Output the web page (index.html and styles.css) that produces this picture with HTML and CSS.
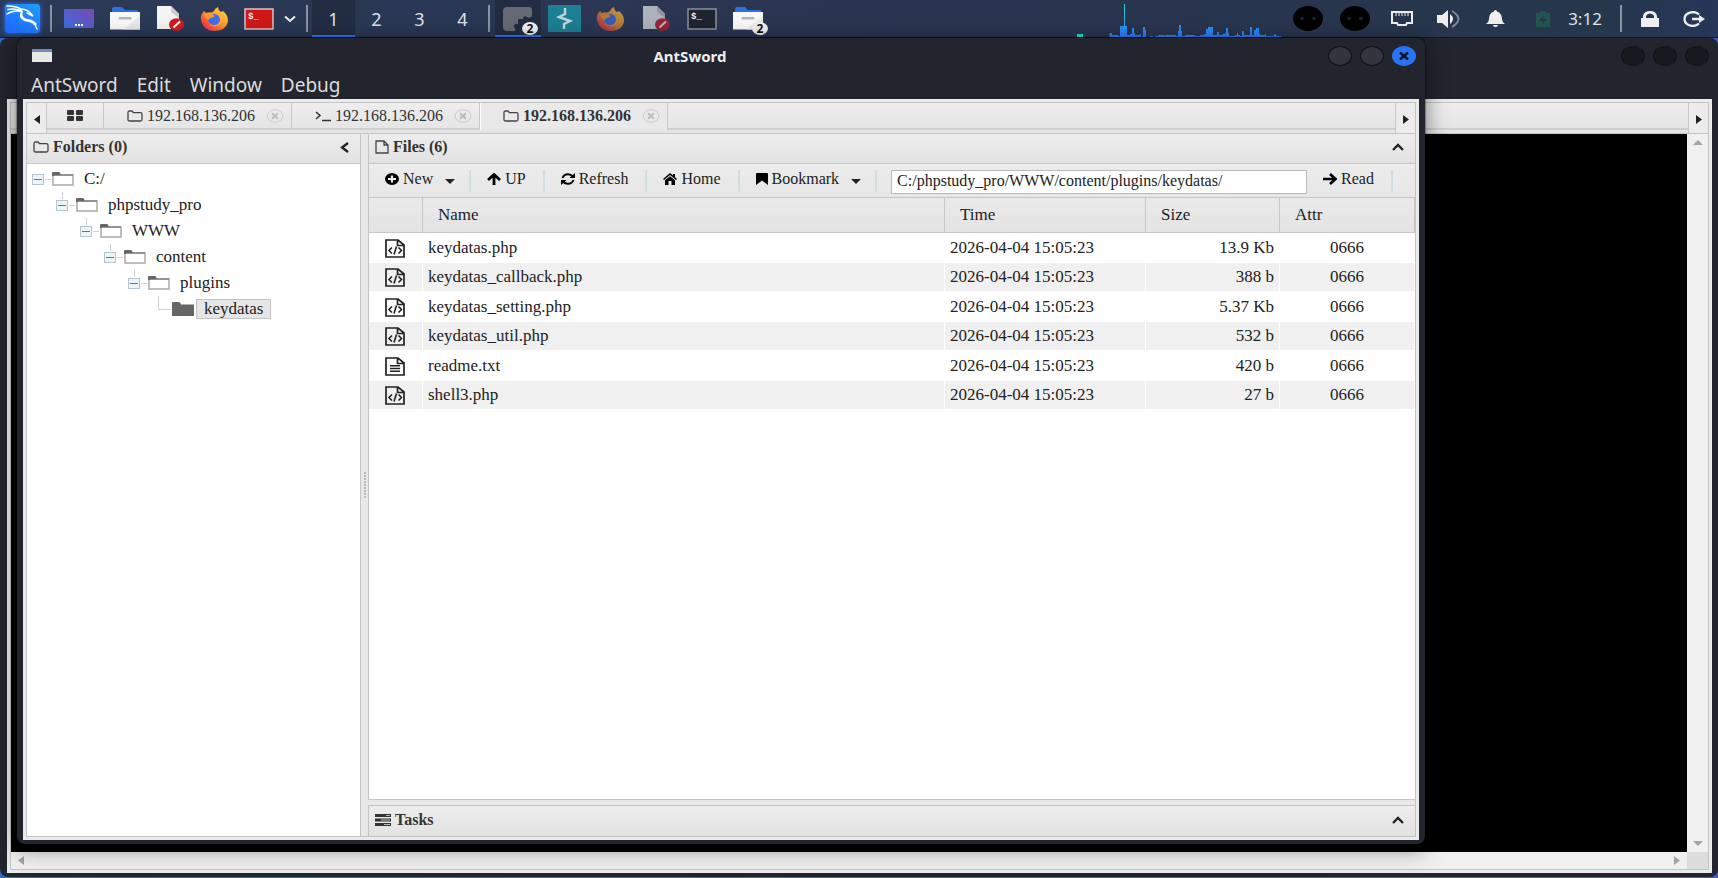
FILE: index.html
```html
<!DOCTYPE html>
<html lang="en">
  <head>
    <meta charset="UTF-8" />
    <meta name="viewport" content="width=device-width, initial-scale=1.0" />
    <title>AntSword</title>
    <link rel="stylesheet" href="styles.css">
  </head>
  <body>
    <!-- shared icons -->
    <svg class="sprite" width="0" height="0" aria-hidden="true">
      <defs>
        <linearGradient id="kaliBg" x1="0" y1="1" x2="1" y2="0">
          <stop offset="0" stop-color="#1f66ff" />
          <stop offset="1" stop-color="#1f9cff" />
        </linearGradient>
        <linearGradient id="deskBg" x1="0" y1="1" x2="1" y2="0">
          <stop offset="0" stop-color="#3b6fe0" />
          <stop offset="1" stop-color="#7a48b0" />
        </linearGradient>
        <linearGradient id="foxBg" x1="1" y1="0" x2="0" y2="1">
          <stop offset="0" stop-color="#ffe14d" />
          <stop offset="0.45" stop-color="#ff9a2b" />
          <stop offset="0.8" stop-color="#f7413f" />
          <stop offset="1" stop-color="#e5206e" />
        </linearGradient>
        <linearGradient id="cpuBg" x1="0" y1="0" x2="0" y2="1">
          <stop offset="0" stop-color="#27e0c8" />
          <stop offset="0.65" stop-color="#2496f5" />
          <stop offset="1" stop-color="#2a7cff" />
        </linearGradient>
      </defs>
      <symbol id="i-folder" viewBox="0 0 16 12" preserveAspectRatio="none">
        <path d="M1 9.500V2.500Q1 1 2.500 1H4.500Q6 1 6.200 2.600H13.500Q15 2.600 15 4V9.500Q15 11 13.500 11H2.500Q1 11 1 9.500Z" fill="none" stroke="#444" stroke-width="1.300" />
      </symbol>
      <symbol id="i-file" viewBox="0 0 14 14" preserveAspectRatio="none">
        <path d="M1 1H9L13 5V13H1ZM9 1V5H13" fill="none" stroke="#444" stroke-width="1.300" />
      </symbol>
      <symbol id="i-close" viewBox="0 0 18 14" preserveAspectRatio="none">
        <ellipse cx="9" cy="7" rx="8" ry="6.300" fill="none" stroke="#ccc" />
        <path d="M6 4.300L12 9.700M12 4.300L6 9.700" stroke="#bdbdbd" stroke-width="2.200" />
      </symbol>
      <symbol id="i-tree" viewBox="0 0 22 14" preserveAspectRatio="none">
        <path d="M1 3V13H21V3Z" fill="#fff" stroke="#aaa" stroke-width="1.500" />
        <path d="M0 4V1Q0 0 1 0H7Q8.500 0 8.500 2.500H21V3.500H2V4Z" fill="#666" />
      </symbol>
      <symbol id="i-tree-full" viewBox="0 0 22 14" preserveAspectRatio="none">
        <path d="M0 14V1Q0 0 1 0H7Q8.500 0 9 2.500H22V14Z" fill="#666" />
      </symbol>
      <symbol id="i-code" viewBox="0 0 20 19" preserveAspectRatio="none">
        <path d="M1 1H13L19 6V18H1ZM12.500 1V6.500H19" fill="none" stroke="#222" stroke-width="1.700" />
        <path d="M7 8.500L4 11.500L7 14.500M13.500 8.500L16.500 11.500L13.500 14.500M11.500 7.500L9 15.500" fill="none" stroke="#222" stroke-width="1.600" />
      </symbol>
      <symbol id="i-text" viewBox="0 0 20 19" preserveAspectRatio="none">
        <path d="M1 1H13L19 6V18H1ZM12.500 1V6.500H19" fill="none" stroke="#222" stroke-width="1.700" />
        <path d="M5 8.700H15M5 11.500H15M5 14.300H15" stroke="#222" stroke-width="1.600" />
      </symbol>
      <symbol id="i-fox" viewBox="0 0 28 24" preserveAspectRatio="none">
        <path d="M1 13C0 8 3 5 4 4L6 6Q9 5 11 5.500Q13 5 14 4Q15 1 18 0Q18 3 21 5L23 4Q28 8 28 14C27 21 21 24 14 24C7 24 2 19 1 13Z" fill="url(#foxBg)" />
        <ellipse cx="14" cy="12.500" rx="6" ry="5.500" fill="#3f6fe8" />
        <path d="M4 7Q9 5 12 7L15 9Q13 11 10 11L9 13Q5 12 4 7Z" fill="#ff9a2b" />
        <path d="M8 14Q10 18 14 18Q19 18 20 13Q20 10 18 7Q25 10 22 16Q18 21 12 19Q9 18 8 14Z" fill="#ffb03a" opacity="0.6" />
      </symbol>
      <symbol id="i-nodoc" viewBox="0 0 28 25" preserveAspectRatio="none">
        <path d="M1 0H15L23 8V23H1Z" fill="#f4f4f4" />
        <path d="M15 0L23 8V12L15 6Z" fill="#ccc" />
        <ellipse cx="20.500" cy="18.500" rx="7.500" ry="6.300" fill="#d11c22" />
        <path d="M17.500 21.500L24 15.500" stroke="#fff" stroke-width="2" />
      </symbol>
      <symbol id="i-files" viewBox="0 0 30 23" preserveAspectRatio="none">
        <path d="M2 7V2Q2 0 4 0H12L15 3H28V7Z" fill="#2f6fe6" />
        <path d="M0 5H30V22.500H0Z" fill="#f8f8f8" />
        <path d="M30 9V22.500H13Z" fill="#e9e9e9" />
        <rect x="8.500" y="10" width="13" height="2.500" rx="1.200" fill="#b5b5b5" />
      </symbol>
      <symbol id="i-eyes" viewBox="0 0 30 25" preserveAspectRatio="none">
        <ellipse cx="15" cy="12.500" rx="15" ry="12.500" fill="#000" />
        <circle cx="9" cy="12.500" r="1.800" fill="#1c2638" />
        <circle cx="21" cy="12.500" r="1.800" fill="#1c2638" />
      </symbol>
    </svg>

    <header class="panel">
      <button class="kali" aria-label="Applications">
        <svg width="35" height="29" viewBox="0 0 35 29">
          <rect width="35" height="29" rx="3" fill="url(#kaliBg)" />
          <path d="M2 2Q11 2 16 5Q23 5 28 12L22 9M3 5.500Q9 4 16 6.500M2 10Q8 6 17 7.500M17 7Q13 14 20 16.500Q30 17 32 25M17 8Q15 13 21 15.500Q28 16 31 20" fill="none" stroke="#fff" stroke-width="1.500" stroke-linecap="round" />
        </svg>
      </button>
      <span class="divider"></span>
      <nav class="launchers">
        <button aria-label="Show desktop">
          <svg width="30" height="19"><rect width="30" height="19" rx="1" fill="url(#deskBg)" /><path d="M11 16H19" stroke="#fff" stroke-width="2" stroke-dasharray="2 1" /></svg>
        </button>
        <button aria-label="Files"><svg width="30" height="23"><use href="#i-files" /></svg></button>
        <button aria-label="Text editor"><svg width="28" height="25"><use href="#i-nodoc" /></svg></button>
        <button aria-label="Firefox"><svg width="28" height="24"><use href="#i-fox" /></svg></button>
        <div class="split">
          <button aria-label="Root terminal">
            <svg width="30" height="22"><rect x="1" y="1" width="28" height="20" fill="#d01818" stroke="#d8c4c4" stroke-width="1.500" /><text class="prompt" x="4" y="11">$_</text></svg>
          </button>
          <button aria-label="More terminals">
            <svg width="12" height="8"><path d="M1 1.500L6 6L11 1.500" fill="none" stroke="#eee" stroke-width="2" /></svg>
          </button>
        </div>
      </nav>
      <span class="divider"></span>
      <nav class="workspaces">
        <button class="active">1</button>
        <button>2</button>
        <button>3</button>
        <button>4</button>
      </nav>
      <span class="divider"></span>
      <nav class="tasks">
        <button class="active" aria-label="AntSword">
          <svg width="30" height="24"><path d="M4 0H26Q29 0 29 3V9Q27 12 24 10Q20 8 20 12H15V17Q11 16 11 20Q14 23 11 24H4Q0 24 0 20V4Q0 0 4 0Z" fill="#666a74" /></svg>
          <span class="badge">2</span>
        </button>
        <button aria-label="Burp Suite">
          <svg width="33" height="27"><rect width="33" height="27" fill="#1d7f94" /><path d="M17 3V9L11 12L22 16L16 19V24" fill="none" stroke="#bcd5dc" stroke-width="2.500" /></svg>
        </button>
        <button class="dim" aria-label="Firefox"><svg width="28" height="24"><use href="#i-fox" /></svg></button>
        <button class="dim" aria-label="Text editor"><svg width="28" height="25"><use href="#i-nodoc" /></svg></button>
        <button aria-label="Terminal">
          <svg width="30" height="22"><rect x="1" y="1" width="28" height="20" fill="#1f2430" stroke="#8b919c" stroke-width="1.500" /><text class="prompt" x="4" y="11">$_</text></svg>
        </button>
        <button aria-label="Files"><svg width="30" height="23"><use href="#i-files" /></svg><span class="badge">2</span></button>
      </nav>

      <div class="tray">
        <svg class="cpu" width="207" height="37">
          <rect x="0" y="34" width="6" height="3" fill="#16e8c8" />
          <path d="M32.500 37V33H35V35H41V36H43V26H47V4H48V26H50V35H53V34H55V28H57V33H58V35H63V34H64V37ZM65 37V36H66V27H68V30H69V37ZM73 37V36H76V37ZM78 37V36H81V35H87V36H88V35H99V36H101V31H102V25H104V31H105V36H108V35H118V36H123V35H127V34H129V29H131V27H136V35H140V32H142V35H145V34H148V33H149V28H151V33H152V36H158V35H160V33H161V35H163V36H165V31H167V35H173V27H175V35H177V30H179V28H182V33H183V35H188V34H189V36H197V34H199V36H204V37Z" fill="url(#cpuBg)" />
        </svg>
        <button aria-label="Eyes"><svg width="30" height="25"><use href="#i-eyes" /></svg></button>
        <button aria-label="Eyes"><svg width="30" height="25"><use href="#i-eyes" /></svg></button>
        <button aria-label="Network">
          <svg width="22" height="15"><path d="M1 1H21V12H16L15 14H7L6 12H1Z" fill="none" stroke="#eee" stroke-width="2" /><path d="M5 2V5M8 2V5M11 2V5M14 2V5M17 2V5" stroke="#eee" /></svg>
        </button>
        <button aria-label="Volume">
          <svg width="24" height="18"><path d="M0 5H5L11 0V18L5 13H0Z" fill="#eee" /><path d="M13 4Q19 9 13 14Z" fill="#eee" /><path d="M15 1Q28 9 15 17" fill="none" stroke="#7f8899" stroke-width="2" /></svg>
        </button>
        <button aria-label="Notifications">
          <svg width="19" height="17"><path d="M9.500 0Q11 0 11 1.500Q16 3 16 9Q16 12 19 14H0Q3 12 3 9Q3 3 8 1.500Q8 0 9.500 0ZM7 15H12Q12 17 9.500 17Q7 17 7 15Z" fill="#eee" /></svg>
        </button>
        <button aria-label="Battery">
          <svg width="14" height="16"><path d="M0 2H4V0H10V2H14V16H0Z" fill="#24544e" /><path d="M8 4L3 10H7L6 14L11 8H7Z" fill="#21334b" /></svg>
        </button>
        <time class="clock">3:12</time>
        <span class="divider"></span>
        <button class="session" aria-label="Lock screen">
          <svg width="18" height="16"><path d="M0 7H2V5Q3 0 9 0Q15 0 16 5V7H18V16H0ZM5 7H13V5Q12 2.500 9 2.500Q6 2.500 5 5Z" fill="#eee" fill-rule="evenodd" /></svg>
        </button>
        <button class="session" aria-label="Log out">
          <svg width="23" height="16"><path d="M16 3.500Q13.500 1 9.500 1Q1.500 2 1.500 8Q1.500 14 9.500 15Q13.500 15 16 12.500" fill="none" stroke="#eee" stroke-width="2.300" /><path d="M9 8H18" stroke="#eee" stroke-width="2.500" /><path d="M16 4L22 8L16 12Z" fill="#eee" /></svg>
        </button>
      </div>
    </header>

    <main class="desktop">
      <!-- window behind -->
      <section class="window window-back">
        <div class="titlebar">
          <span class="title"></span>
          <button class="control" aria-label="Minimize"></button>
          <button class="control" aria-label="Maximize"></button>
          <button class="control" aria-label="Close"></button>
        </div>
        <div class="menubar"></div>
        <div class="client">
          <div class="frame">
            <div class="tabbar">
              <div class="tabs"></div>
              <button class="scroll-tab" aria-label="Next tabs"><svg width="6" height="9"><path d="M0 0L6 4.500L0 9Z" fill="#222" /></svg></button>
            </div>
            <div class="terminal">
              <div class="screen"></div>
              <div class="scrollbar-y">
                <svg width="10" height="5"><path d="M0 5L5 0L10 5Z" fill="#a3a3a3" /></svg>
                <svg width="10" height="5"><path d="M0 0L5 5L10 0Z" fill="#a3a3a3" /></svg>
              </div>
              <div class="scrollbar-x">
                <svg width="6" height="9"><path d="M6 0L0 4.500L6 9Z" fill="#a3a3a3" /></svg>
                <svg width="6" height="9"><path d="M0 0L6 4.500L0 9Z" fill="#a3a3a3" /></svg>
              </div>
              <div class="corner"></div>
            </div>
          </div>
        </div>
      </section>

      <!-- active window -->
      <section class="window window-front">
        <div class="titlebar">
          <svg width="20" height="13"><rect width="20" height="13" fill="#e8e8e4" /><rect width="20" height="3" fill="#6f8db8" /></svg>
          <span class="title">AntSword</span>
          <button class="control" aria-label="Minimize"></button>
          <button class="control" aria-label="Maximize"></button>
          <button class="control close" aria-label="Close">
            <svg width="10" height="8"><path d="M1 0.500L9 7.500M9 0.500L1 7.500" stroke="#0d1424" stroke-width="2.400" /></svg>
          </button>
        </div>
        <nav class="menubar">
          <button>AntSword</button>
          <button>Edit</button>
          <button>Window</button>
          <button>Debug</button>
        </nav>

        <div class="client">
          <div class="frame">
            <div class="tabbar">
              <button class="scroll-tab" aria-label="Previous tabs"><svg width="6" height="9"><path d="M6 0L0 4.500L6 9Z" fill="#222" /></svg></button>
              <div class="tabs">
                <button class="tab-home" aria-label="Home">
                  <svg width="16" height="11"><path d="M1 0H6Q7 0 7 1V4Q7 5 6 5H1Q0 5 0 4V1Q0 0 1 0ZM10 0H15Q16 0 16 1V4Q16 5 15 5H10Q9 5 9 4V1Q9 0 10 0ZM1 6H6Q7 6 7 7V10Q7 11 6 11H1Q0 11 0 10V7Q0 6 1 6ZM10 6H15Q16 6 16 7V10Q16 11 15 11H10Q9 11 9 10V7Q9 6 10 6Z" fill="#333" /></svg>
                </button>
                <div class="tab">
                  <button class="tab-label"><svg width="16" height="12"><use href="#i-folder" /></svg>192.168.136.206</button>
                  <button class="tab-close" aria-label="Close tab"><svg width="18" height="14"><use href="#i-close" /></svg></button>
                </div>
                <div class="tab">
                  <button class="tab-label"><svg width="16" height="12"><path d="M1 2L5 5.500L1 9M7 10.500H16" fill="none" stroke="#333" stroke-width="1.500" /></svg>192.168.136.206</button>
                  <button class="tab-close" aria-label="Close tab"><svg width="18" height="14"><use href="#i-close" /></svg></button>
                </div>
                <div class="tab active">
                  <button class="tab-label"><svg width="16" height="12"><use href="#i-folder" /></svg>192.168.136.206</button>
                  <button class="tab-close" aria-label="Close tab"><svg width="18" height="14"><use href="#i-close" /></svg></button>
                </div>
              </div>
              <button class="scroll-tab" aria-label="Next tabs"><svg width="6" height="9"><path d="M0 0L6 4.500L0 9Z" fill="#222" /></svg></button>
            </div>

            <div class="manager">
              <aside class="folders">
                <div class="cell-header">
                  <svg width="16" height="12"><use href="#i-folder" /></svg>
                  <h2>Folders (0)</h2>
                  <button aria-label="Collapse folders"><svg width="9" height="11"><path d="M8 1L2 5.500L8 10" fill="none" stroke="#222" stroke-width="2.300" /></svg></button>
                </div>
                <ul class="tree">
                  <li>
                    <div class="node"><button class="toggle" aria-label="Collapse"></button><svg width="22" height="14"><use href="#i-tree" /></svg><span>C:/</span></div>
                    <ul>
                      <li>
                        <div class="node"><button class="toggle" aria-label="Collapse"></button><svg width="22" height="14"><use href="#i-tree" /></svg><span>phpstudy_pro</span></div>
                        <ul>
                          <li>
                            <div class="node"><button class="toggle" aria-label="Collapse"></button><svg width="22" height="14"><use href="#i-tree" /></svg><span>WWW</span></div>
                            <ul>
                              <li>
                                <div class="node"><button class="toggle" aria-label="Collapse"></button><svg width="22" height="14"><use href="#i-tree" /></svg><span>content</span></div>
                                <ul>
                                  <li>
                                    <div class="node"><button class="toggle" aria-label="Collapse"></button><svg width="22" height="14"><use href="#i-tree" /></svg><span>plugins</span></div>
                                    <ul>
                                      <li>
                                        <div class="node leaf"><i class="elbow"></i><svg width="22" height="14"><use href="#i-tree-full" /></svg><span class="selected">keydatas</span></div>
                                      </li>
                                    </ul>
                                  </li>
                                </ul>
                              </li>
                            </ul>
                          </li>
                        </ul>
                      </li>
                    </ul>
                  </li>
                </ul>
              </aside>

              <div class="splitter"><i class="grip"></i></div>

              <div class="right">
                <section class="files">
                  <div class="cell-header">
                    <svg width="14" height="14"><use href="#i-file" /></svg>
                    <h2>Files (6)</h2>
                    <button aria-label="Collapse files"><svg width="12" height="8"><path d="M1 7L6 2L11 7" fill="none" stroke="#222" stroke-width="2.300" /></svg></button>
                  </div>
                  <div class="toolbar">
                    <button class="drop">
                      <svg width="14" height="12"><ellipse cx="7" cy="6" rx="7" ry="6" fill="#000" /><path d="M3 6H11M7 2.500V9.500" stroke="#eee" stroke-width="2.200" /></svg>
                      New
                      <svg class="caret" width="10" height="5"><path d="M0 0H10L5 5Z" fill="#222" /></svg>
                    </button>
                    <span class="sep"></span>
                    <button>
                      <svg width="14" height="12"><path d="M7 12V2M1 7L7 1.500L13 7" fill="none" stroke="#000" stroke-width="2.800" /></svg>
                      UP
                    </button>
                    <span class="sep"></span>
                    <button>
                      <svg width="14" height="12"><path d="M1.500 5Q3 1.200 7 1.200Q10 1.200 12 3.500M12.500 7Q11 10.800 7 10.800Q4 10.800 2 8.500" fill="none" stroke="#000" stroke-width="2" /><path d="M14 0V5H8.500ZM0 12V7H5.500Z" fill="#000" /></svg>
                      Refresh
                    </button>
                    <span class="sep"></span>
                    <button>
                      <svg width="14" height="12"><path d="M0 6L7 0L10 2.500V1H12V4.200L14 6L13 7L7 2L1 7ZM2 7.300L7 3.200L12 7.300V12H8.500V8H5.500V12H2Z" fill="#000" /></svg>
                      Home
                    </button>
                    <span class="sep"></span>
                    <button class="drop">
                      <svg width="12" height="12"><path d="M0 1Q0 0 1 0H11Q12 0 12 1V12L6 7.500L0 12Z" fill="#000" /></svg>
                      Bookmark
                      <svg class="caret" width="10" height="5"><path d="M0 0H10L5 5Z" fill="#222" /></svg>
                    </button>
                    <span class="sep"></span>
                    <input class="path" type="text" aria-label="Path" value="C:/phpstudy_pro/WWW/content/plugins/keydatas/">
                    <button>
                      <svg width="14" height="12"><path d="M0 6H12M7 1L12.500 6L7 11" fill="none" stroke="#000" stroke-width="2.600" /></svg>
                      Read
                    </button>
                    <span class="sep"></span>
                  </div>
                  <div class="list">
                    <table>
                      <colgroup>
                        <col class="col-icon">
                        <col>
                        <col class="col-time">
                        <col class="col-size">
                        <col class="col-attr">
                      </colgroup>
                      <thead>
                        <tr><th></th><th>Name</th><th>Time</th><th>Size</th><th>Attr</th></tr>
                      </thead>
                      <tbody>
                        <tr><td><svg width="20" height="19"><use href="#i-code" /></svg></td><td>keydatas.php</td><td>2026-04-04 15:05:23</td><td>13.9 Kb</td><td>0666</td></tr>
                        <tr><td><svg width="20" height="19"><use href="#i-code" /></svg></td><td>keydatas_callback.php</td><td>2026-04-04 15:05:23</td><td>388 b</td><td>0666</td></tr>
                        <tr><td><svg width="20" height="19"><use href="#i-code" /></svg></td><td>keydatas_setting.php</td><td>2026-04-04 15:05:23</td><td>5.37 Kb</td><td>0666</td></tr>
                        <tr><td><svg width="20" height="19"><use href="#i-code" /></svg></td><td>keydatas_util.php</td><td>2026-04-04 15:05:23</td><td>532 b</td><td>0666</td></tr>
                        <tr><td><svg width="20" height="19"><use href="#i-text" /></svg></td><td>readme.txt</td><td>2026-04-04 15:05:23</td><td>420 b</td><td>0666</td></tr>
                        <tr><td><svg width="20" height="19"><use href="#i-code" /></svg></td><td>shell3.php</td><td>2026-04-04 15:05:23</td><td>27 b</td><td>0666</td></tr>
                      </tbody>
                    </table>
                  </div>
                </section>
                <section class="task-cell">
                  <div class="cell-header">
                    <svg width="16" height="12"><path d="M0 0H16V3H0ZM0 4.500H16V7.500H0ZM0 9H16V12H0Z" fill="#333" /><path d="M11 1.500H15M6 6H15M9 10.500H15" stroke="#bbb" /></svg>
                    <h2>Tasks</h2>
                    <button aria-label="Expand tasks"><svg width="12" height="8"><path d="M1 7L6 2L11 7" fill="none" stroke="#222" stroke-width="2.300" /></svg></button>
                  </div>
                </section>
              </div>
            </div>
          </div>
        </div>
      </section>
    </main>
  </body>
</html>
```
FILE: styles.css
```css
* {
  box-sizing: border-box;
}

body {
  margin: 0;
  height: 100vh;
  display: flex;
  flex-direction: column;
  overflow: hidden;
  font: 16px/20px "Liberation Serif", "Times New Roman", serif;
  color: #333;
  background: #14161c;
}

button {
  display: flex;
  align-items: center;
  justify-content: center;
  padding: 0;
  border: none;
  background: none;
  font: inherit;
  color: inherit;
  white-space: nowrap;
}

svg {
  display: block;
  flex: none;
}

.sprite {
  position: absolute;
}

/* top panel */
.panel {
  flex: none;
  height: 37px;
  display: flex;
  align-items: center;
  padding: 0 2px 0 5px;
  background: linear-gradient(90deg, #2b3a57, #2a3450 60%, #26374c 93%, #273659);
  font: 18px/20px "Noto Sans", sans-serif;
  color: #dde2ea;
}

.divider {
  width: 2px;
  height: 27px;
  background: #8b93a3;
}

.kali {
  margin-right: 10px;
  border-radius: 3px;
  box-shadow: 0 0 5px #2a76ff;
}

.launchers {
  display: flex;
  align-items: center;
  gap: 16px;
  margin: 0 10px 0 12px;
}

.split {
  display: flex;
  align-items: center;
  gap: 10px;
}

.workspaces {
  display: flex;
  height: 100%;
  margin: 0 4px;
}

.workspaces button {
  width: 43px;
}

.workspaces .active,
.tasks .active {
  background: #222d44;
  box-shadow: inset 0 -2px #2777ff;
}

.tasks {
  display: flex;
  height: 100%;
  margin-left: 5px;
}

.tasks button {
  position: relative;
  width: 46px;
}

.dim svg {
  opacity: 0.65;
}

.badge {
  position: absolute;
  right: 3px;
  bottom: 2px;
  width: 16px;
  height: 13px;
  border-radius: 50%;
  background: #f2f2f2;
  color: #111;
  font-size: 12px;
  font-weight: bold;
  line-height: 13px;
  text-align: center;
}

.prompt {
  font: bold 9px "Liberation Mono", monospace;
  fill: #eee;
}

.tray {
  display: flex;
  align-items: center;
  height: 100%;
  margin-left: auto;
}

.tray button {
  width: 47px;
}

.tray .session {
  width: 44px;
}

.clock {
  width: 38px;
  margin-right: 16px;
  font-size: 17px;
  text-align: center;
}

.tray .divider {
  margin-right: 6px;
}

/* windows */
.desktop {
  position: relative;
  flex: 1;
  margin-top: 1px;
  background: linear-gradient(90deg, #3268c8, #4a55b8);
}

.window {
  position: absolute;
  display: flex;
  flex-direction: column;
  padding: 0 6px 4px;
  border-radius: 8px;
  background: #22252e;
}

.window-back {
  inset: 0 0 1px;
  padding-left: 7px;
}

.window-front {
  inset: 0 293px 34px 17px;
  box-shadow: 0 4px 22px rgba(0, 0, 0, 0.5), 0 0 2px #000;
}

.titlebar {
  flex: none;
  display: flex;
  align-items: center;
  gap: 8px;
  height: 35px;
  padding: 0 3px 0 9px;
}

.title {
  flex: 1;
  text-align: center;
  font: bold 15px/20px "Noto Sans", sans-serif;
  color: #eee;
}

.control {
  width: 24px;
  height: 20px;
  border: 1px solid #0d0f13;
  border-radius: 50%;
  background: #31353f;
}

.window-back .control {
  border-color: #121418;
  background: #17191e;
}

.window-front .close {
  border-color: #2872f5;
  background: #2872f5;
}

.menubar {
  flex: none;
  display: flex;
  gap: 19px;
  height: 26px;
  padding: 0 8px 2px;
  font: 19px/20px "Noto Sans", sans-serif;
  color: #dcdcdc;
}

.client {
  flex: 1;
  display: flex;
  min-height: 0;
  padding: 3px;
  background: #ebebeb;
}

.frame {
  flex: 1;
  min-width: 0;
  display: flex;
  flex-direction: column;
  border: 1px solid #c4c4c4;
}

/* tab bar */
.tabbar {
  flex: none;
  display: flex;
  height: 31px;
  border-bottom: 1px solid #c4c4c4;
  background: linear-gradient(#ededed, #e4e4e4);
}

.scroll-tab {
  width: 20px;
  padding-top: 2px;
  border: 0 solid #c8c8c8;
  border-left-width: 1px;
  background: #ececec;
}

.scroll-tab:first-child {
  border-left-width: 0;
  border-right-width: 1px;
}

.tabs {
  flex: 1;
  display: flex;
  height: 27px;
  border-bottom: 2px solid #cfcfcf;
}

.tab-home {
  width: 57px;
  border-right: 1px solid #c8c8c8;
}

.tab {
  display: flex;
  align-items: center;
  gap: 11px;
  height: 25px;
  width: 188px;
  padding-left: 23px;
  border-right: 1px solid #c8c8c8;
}

.tab.active {
  height: 27px;
  padding: 0 0 2px 22px;
  border-left: 1px solid #fff;
  background: #e9e9e9;
  font-weight: bold;
}

.tab-label {
  gap: 4px;
}

/* panes */
.manager {
  flex: 1;
  display: flex;
  min-height: 0;
}

.folders {
  flex: none;
  width: 334px;
  display: flex;
  flex-direction: column;
  border-right: 1px solid #c4c4c4;
  background: #fff;
}

.cell-header {
  flex: none;
  display: flex;
  align-items: center;
  gap: 4px;
  height: 30px;
  padding: 0 11px 3px 6px;
  border-bottom: 1px solid #c8c8c8;
  background: linear-gradient(#ededed, #e2e2e2);
}

.cell-header h2 {
  flex: 1;
  margin: 0;
  font-size: 16px;
}

.tree,
.tree ul {
  margin: 0;
  padding: 0;
  list-style: none;
  color: #222;
}

.tree {
  padding: 2px 0 0 5px;
  font-size: 17px;
}

.tree ul {
  padding-left: 24px;
}

.node {
  position: relative;
  display: flex;
  align-items: center;
  height: 26px;
}

.node span {
  margin-left: 2px;
  padding: 0 7px 1px;
  border: 1px solid transparent;
  line-height: 17px;
}

.node .selected {
  border-color: #c4c4c4;
  background: #e6e6e6;
}

.toggle {
  width: 12px;
  height: 11px;
  margin-right: 8px;
  border: 1px solid #b4c6d0;
  background: linear-gradient(#5a7a90, #5a7a90) center / 8px 1px no-repeat #eef3f6;
}

/* tree connectors */
.toggle::after {
  content: "";
  position: absolute;
  left: 13px;
  width: 6px;
  height: 1px;
  background: #d0d0d0;
}

.tree ul .toggle::before {
  content: "";
  position: absolute;
  left: 6px;
  top: 0;
  width: 1px;
  height: 7px;
  background: #d0d0d0;
}

.elbow {
  width: 13px;
  height: 14px;
  margin: 0 1px 12px 6px;
  border-left: 1px solid #d0d0d0;
  border-bottom: 1px solid #d0d0d0;
}

.splitter {
  flex: none;
  width: 7px;
  display: flex;
  align-items: center;
  justify-content: center;
  background: #e8e8e8;
}

.grip {
  width: 2px;
  height: 26px;
  background: repeating-linear-gradient(#bbb 0 2px, transparent 2px 3px);
}

.right {
  flex: 1;
  min-width: 0;
  display: flex;
  flex-direction: column;
  gap: 5px;
  background: #e8e8e8;
}

.files {
  flex: 1;
  min-height: 0;
  display: flex;
  flex-direction: column;
  border-left: 1px solid #c4c4c4;
  border-bottom: 1px solid #c4c4c4;
  background: #fff;
}

.task-cell {
  border-top: 1px solid #c4c4c4;
  border-left: 1px solid #c4c4c4;
}

.task-cell .cell-header {
  border-bottom: none;
}

/* toolbar */
.toolbar {
  flex: none;
  display: flex;
  align-items: center;
  height: 34px;
  border-bottom: 1px solid #c8c8c8;
  background: linear-gradient(#ececec, #e6e6e6);
  color: #222;
}

.toolbar button {
  gap: 4px;
  padding: 0 17px 3px 16px;
}

.toolbar .drop {
  padding-right: 14px;
}

.caret {
  margin: 4px 0 0 8px;
}

.sep {
  width: 2px;
  height: 22px;
  background: #d0dee2;
}

.path {
  flex: 0 1 416px;
  min-width: 80px;
  height: 24px;
  margin: 2px 0 0 14px;
  padding: 0 5px 2px;
  border: 1px solid #bbb;
  background: #fff;
  font: inherit;
  color: #222;
}

/* file list */
.list {
  flex: 1;
  min-height: 0;
  overflow: auto;
}

table {
  width: 100%;
  table-layout: fixed;
  border-collapse: separate;
  border-spacing: 0;
  font-size: 17px;
  color: #222;
}

.col-icon {
  width: 54px;
}

.col-time {
  width: 201px;
}

.col-size {
  width: 134px;
}

.col-attr {
  width: 135px;
}

th {
  height: 35px;
  padding: 0 15px;
  border-right: 1px solid #c8c8c8;
  border-bottom: 1px solid #c8c8c8;
  background: linear-gradient(#eaeaea, #e3e3e3);
  font-weight: normal;
  text-align: left;
}

td {
  height: 30px;
  padding: 0 5px;
  border-right: 1px solid #fff;
}

tr:nth-child(even) td {
  height: 29px;
  border-bottom: 1px solid #fff;
  background: #f0f0f0;
}

td:first-child {
  padding-left: 16px;
}

td:nth-child(4) {
  text-align: right;
}

td:nth-child(5) {
  text-align: center;
}

/* terminal in the back window */
.terminal {
  flex: 1;
  display: grid;
  grid-template: 1fr 17px / 1fr 21px;
}

.screen {
  background: #000;
}

.scrollbar-x,
.scrollbar-y {
  display: flex;
  align-items: center;
  justify-content: space-between;
  padding: 0 7px;
  background: #f0f0f0;
}

.scrollbar-y {
  grid-column: 2;
  grid-row: 1;
  flex-direction: column;
  padding: 6px 0;
}

.corner {
  background: #dcdcdc;
}
```
